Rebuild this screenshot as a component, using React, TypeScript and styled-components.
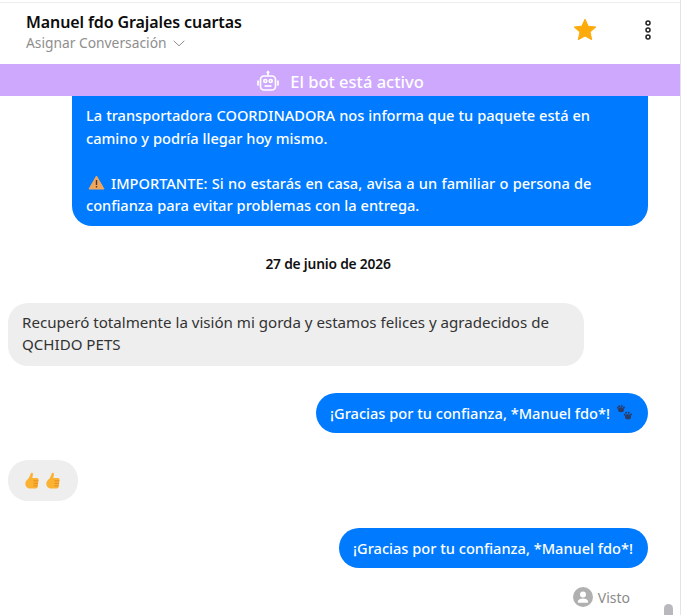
import React from "react";
import styled, { createGlobalStyle } from "styled-components";

const Global = createGlobalStyle`
  html, body { margin: 0; padding: 0; background: #fff; overflow: hidden; }
  * { box-sizing: border-box; }
  #root { font-family: "Noto Sans", "Liberation Sans", sans-serif; }
`;

const Page = styled.div`
  position: relative; width: 681px; height: 615px; overflow: hidden;
  display: flex; flex-direction: column;
  border-right: 1px solid #e4e4e4; padding-top: 2px;
`;
const Header = styled.header`
  height: 62px; flex: none; display: flex; align-items: center;
  border-top: 1px solid #eeeeee; padding: 0 28px 0 26px;
`;
const Who = styled.div`
  flex: 1; display: flex; flex-direction: column; gap: 1px; margin-top: -4px;
`;
const Name = styled.div`
  font-size: 16px; line-height: 22px; font-weight: 600; color: #0b0b0b; letter-spacing: -0.1px;
`;
const Assign = styled.div`
  font-size: 13.8px; line-height: 18px; color: #8e8e8e; display: flex; align-items: center; gap: 6px;
`;
const Actions = styled.div`
  display: flex; align-items: center; gap: 47px; margin-top: -8px;
`;
const Banner = styled.div`
  height: 32px; flex: none; background: #cea8fd; color: #fff;
  display: flex; align-items: center; justify-content: center; gap: 10px;
  font-size: 16.5px; font-weight: 500; padding: 2px 0 0 0;
`;
const Messages = styled.main`
  flex: 1; display: flex; flex-direction: column; padding: 0 32px 0 8px; min-height: 0;
`;
const Bubble = styled.div<{ $out?: boolean; $clipped?: boolean }>`
  font-size: ${p => (p.$out ? "14.6px" : "15.1px")}; line-height: 22.5px; font-weight: ${p => (p.$out ? 500 : 400)};
  color: ${p => (p.$out ? "#fff" : "#333")};
  background: ${p => (p.$out ? "#007bff" : "#eeeeee")};
  border-radius: ${p => (p.$clipped ? "0 0 20px 20px" : "20px")};
  align-self: ${p => (p.$out ? "flex-end" : "flex-start")};
`;
const FirstBubble = styled(Bubble)`
  width: 576px; height: 130px; padding: 8px 14px 0; word-spacing: 0.2px;
`;
const DateLabel = styled.div`
  margin-top: 29px; height: 18px; text-align: center;
  font-size: 13.8px; line-height: 18px; font-weight: 600; color: #111; letter-spacing: -0.2px;
`;
const InBubble = styled(Bubble)`
  width: 576px; height: 63px; margin-top: 30px; padding: 8px 14px 0;
  line-height: 22px;
`;
const ReplyA = styled(Bubble)`
  height: 40px; margin-top: 27px; padding: 0 15px 0 14px; display: flex; align-items: center; gap: 6px;
`;
const Thumbs = styled(Bubble)`
  width: 70px; height: 41px; margin-top: 27px; display: flex; align-items: center; justify-content: center; gap: 7px; padding-right: 2px;
`;
const ReplyB = styled(ReplyA)``;
const Seen = styled.div`
  align-self: flex-end; margin-top: 19px; display: flex; align-items: center; gap: 5px;
  font-size: 14px; color: #8a8a8a; margin-right: 18px;
`;
const WarnLine = styled.div`display: flex; align-items: center; gap: 6px; padding-left: 2px; word-spacing: 0.5px;`;
const Thumb = styled.div`
  position: absolute; left: 664px; top: 604px; width: 9px; height: 30px; border-radius: 5px; background: #b9b9bd;
`;

const Star = () => (
  <svg width="24" height="24" viewBox="0 0 24 24"><path d="M12 1.2l3.2 7 7.6.8-5.7 5.1 1.6 7.6L12 18l-6.7 3.7 1.6-7.6L1.200 9l7.600-.8z" fill="#fcab0a" stroke="#fcab0a" strokeLinejoin="round" /></svg>
);
const Dots = () => (
  <svg width="8" height="20" viewBox="0 0 8 20" fill="none" stroke="#222" strokeWidth="1.5">
    <circle cx="4" cy="3" r="2" /><circle cx="4" cy="10" r="2" /><circle cx="4" cy="17" r="2" />
  </svg>
);
const Chevron = () => (
  <svg width="12" height="7" viewBox="0 0 12 7" fill="none" stroke="#8e8e8e" strokeWidth="1"><path d="M.7.8l5.300 5L11.300.8" /></svg>
);
const Bot = () => (
  <svg width="24" height="24" viewBox="0 0 24 24" fill="none" stroke="#fff" strokeWidth="1.7">
    <circle cx="12" cy="3.200" r="1.400" fill="#fff" stroke="none" />
    <path d="M12 4v2.500" />
    <rect x="4.500" y="7" width="15" height="14" rx="3.500" />
    <circle cx="9.300" cy="12" r="1.500" /><circle cx="14.700" cy="12" r="1.500" />
    <path d="M8.500 17h7" />
    <path d="M2 12v4M22 12v4" strokeLinecap="round" />
  </svg>
);
const Warn = () => (
  <svg width="17" height="15" viewBox="0 0 17 15"><path d="M8.500 1L16 14H1z" fill="#f2a65a" stroke="#f2a65a" strokeLinejoin="round" /><rect x="7.800" y="5" width="1.400" height="5" fill="#4a3a35" /><rect x="7.800" y="11" width="1.400" height="1.500" fill="#4a3a35" /></svg>
);
const Paw = () => (
  <svg width="17" height="16" viewBox="0 0 17 16" fill="#2c3a66">
    <ellipse cx="5" cy="4.800" rx="3" ry="2.500" /><circle cx="1.800" cy="2.800" r="1" /><circle cx="3.200" cy="1.200" r="1" /><circle cx="5.800" cy="1" r="1" /><circle cx="8" cy="2.600" r="1" />
    <ellipse cx="12" cy="11.800" rx="3" ry="2.600" /><circle cx="8.800" cy="9.800" r="1" /><circle cx="10.200" cy="7.800" r="1" /><circle cx="12.800" cy="7.700" r="1" /><circle cx="15" cy="9.500" r="1" />
  </svg>
);
const ThumbsUp = () => (
  <svg width="14" height="17" viewBox="0 0 14 17">
    <path d="M6.500.8c1.200-.5 1.700.8 1.400 2L7.300 6H12c1.300 0 1.700 1 1.500 2l-.7 6.500c-.2 1.300-1 2-2.300 2H5.500C2.500 16.500.3 14.500.3 11.500.3 9 2.500 7.500 3.800 6 5 4.600 5.400 1.300 6.500.8z" fill="#fbb131" />
    <path d="M8.500 8.800h4.800M8.500 11.300h4.500M8.500 13.800h4" stroke="#e58a1f" strokeWidth="1" />
  </svg>
);
const Avatar = () => (
  <svg width="20" height="20" viewBox="0 0 20 20"><circle cx="10" cy="10" r="10" fill="#b0b0b0" /><circle cx="10" cy="7.500" r="3" fill="#fff" /><path d="M4.800 15c0-2.400 2-3.600 5.200-3.600s5.200 1.200 5.200 3.600c0 .5-.4.800-.9.800H5.700c-.5 0-.9-.3-.9-.8z" fill="#fff" /></svg>
);

export default function App() {
  return (
    <>
      <Global />
      <Page>
        <Header>
          <Who>
            <Name>Manuel fdo Grajales cuartas</Name>
            <Assign>Asignar Conversación <Chevron /></Assign>
          </Who>
          <Actions><Star /><Dots /></Actions>
        </Header>
        <Banner><Bot />El bot está activo</Banner>
        <Messages>
          <FirstBubble $out $clipped>
            <div>La transportadora COORDINADORA nos informa que tu paquete está en</div>
            <div>camino y podría llegar hoy mismo.</div>
            <div>&nbsp;</div>
            <WarnLine><Warn />IMPORTANTE: Si no estarás en casa, avisa a un familiar o persona de</WarnLine>
            <div>confianza para evitar problemas con la entrega.</div>
          </FirstBubble>
          <DateLabel>27 de junio de 2026</DateLabel>
          <InBubble>
            <div>Recuperó totalmente la visión mi gorda y estamos felices y agradecidos de</div>
            <div>QCHIDO PETS</div>
          </InBubble>
          <ReplyA $out>¡Gracias por tu confianza, *Manuel fdo*! <Paw /></ReplyA>
          <Thumbs><ThumbsUp /><ThumbsUp /></Thumbs>
          <ReplyB $out>¡Gracias por tu confianza, *Manuel fdo*!</ReplyB>
          <Seen><Avatar />Visto</Seen>
        </Messages>
        <Thumb />
      </Page>
    </>
  );
}
